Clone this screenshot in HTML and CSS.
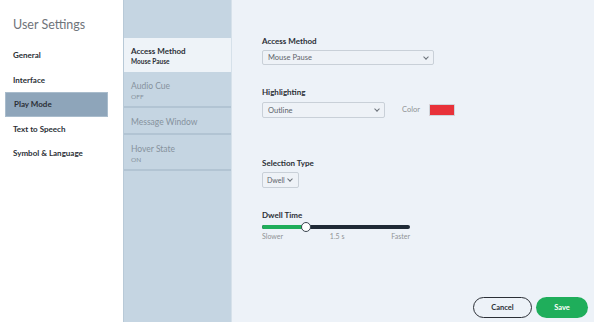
FILE: index.html
```html
<!DOCTYPE html>
<html lang="en">
<head>
    <meta charset="UTF-8">
    <title>User Settings</title>
    <link rel="stylesheet" href="styles.css">
</head>
<body>
    <div class="app">
        <aside class="sidebar">
            <h1>User Settings</h1>
            <nav>
                <a href="#">General</a>
                <a href="#">Interface</a>
                <a href="#" class="active">Play Mode</a>
                <a href="#">Text to Speech</a>
                <a href="#">Symbol &amp; Language</a>
            </nav>
        </aside>

        <div class="subnav">
            <div class="subnav-top"></div>
            <div class="sub-item current">
                <div class="sub-title">Access Method</div>
                <div class="sub-value">Mouse Pause</div>
            </div>
            <div class="sub-item">
                <div class="sub-title">Audio Cue</div>
                <div class="sub-value">OFF</div>
            </div>
            <div class="sub-item single">
                <div class="sub-title">Message Window</div>
            </div>
            <div class="sub-item">
                <div class="sub-title">Hover State</div>
                <div class="sub-value">ON</div>
            </div>
        </div>

        <main class="panel">
            <div class="field">
                <label>Access Method</label>
                <div class="select wide"><span>Mouse Pause</span><span class="caret"></span></div>
            </div>

            <div class="field">
                <label>Highlighting</label>
                <div class="row">
                    <div class="select mid"><span>Outline</span><span class="caret"></span></div>
                    <span class="color-label">Color</span>
                    <span class="swatch"></span>
                </div>
            </div>

            <div class="field spaced">
                <label>Selection Type</label>
                <div class="select small"><span>Dwell</span><span class="caret"></span></div>
            </div>

            <div class="field">
                <label>Dwell Time</label>
                <div class="slider">
                    <div class="track">
                        <div class="fill" style="width: 30%"></div>
                        <div class="thumb" style="left: 30%"></div>
                    </div>
                    <div class="ticks">
                        <span>Slower</span>
                        <span>1.5 s</span>
                        <span>Faster</span>
                    </div>
                </div>
            </div>

            <div class="actions">
                <button class="btn cancel">Cancel</button>
                <button class="btn save">Save</button>
            </div>
        </main>
    </div>
</body>
</html>
```

FILE: styles.css
```css
body {
    margin: 0;
    font-family: 'Lato', 'Noto Sans', sans-serif;
    color: #2b2f36;
}
.app {
    display: flex;
    width: 594px;
    height: 322px;
    overflow: hidden;
}
.sidebar {
    width: 123px;
    background: #ffffff;
    flex-shrink: 0;
}
.sidebar h1 {
    margin: 17px 0 0 13px;
    font-size: 12.5px;
    font-weight: 400;
    color: #6f747b;
}
.sidebar nav {
    display: flex;
    flex-direction: column;
    margin-top: 11px;
}
.sidebar nav a {
    display: block;
    height: 24.5px;
    line-height: 24.5px;
    margin-right: 15px;
    margin-left: 5px;
    padding-left: 8px;
    font-size: 8px;
    font-weight: 700;
    color: #2b2f36;
    text-decoration: none;
}
.sidebar nav a.active {
    background: #8ea5ba;
    border: 1px solid #a9bccc;
    height: 22.5px;
    line-height: 22.5px;
}
.subnav {
    width: 107px;
    flex-shrink: 0;
    background: #c5d5e2;
    border-left: 1px solid #b8c9d7;
    border-right: 1px solid #d6e1ea;
}
.subnav-top {
    height: 38px;
}
.sub-item {
    height: 36px;
    padding: 9px 7px 0;
    box-sizing: border-box;
    border-bottom: 2px solid #b2c4d3;
    color: #86929d;
}
.sub-item.single {
    height: 27px;
}
.sub-item.current {
    background: #eef3f8;
    color: #2b2f36;
    border-bottom: none;
    height: 34px;
    padding-top: 8px;
}
.sub-title {
    font-size: 8.5px;
    line-height: 10px;
}
.current .sub-title {
    font-size: 8px;
    font-weight: 700;
}
.sub-value {
    font-size: 6.5px;
    line-height: 10px;
    margin-top: 1px;
}
.current .sub-value {
    font-weight: 700;
}
.panel {
    flex: 1;
    background: #edf2f8;
    padding: 36px 0 0 30px;
    position: relative;
}
.field {
    margin-bottom: 22px;
}
.field.spaced {
    margin-top: 40px;
    margin-bottom: 22px;
}
.field label {
    display: block;
    font-size: 8px;
    font-weight: 700;
    margin-bottom: 4px;
}
.row {
    display: flex;
    align-items: center;
}
.select {
    display: flex;
    justify-content: space-between;
    align-items: center;
    height: 15px;
    box-sizing: border-box;
    padding: 0 5px;
    border: 1px solid #c9d0d8;
    border-radius: 2px;
    background: #eef2f7;
    font-size: 7.5px;
    color: #5d636a;
}
.select.wide {
    width: 172px;
}
.select.mid {
    width: 123px;
    height: 16px;
    margin-top: 1px;
}
.select.small {
    width: 37px;
    height: 16px;
    padding: 0 6px 0 4px;
    font-size: 7px;
}
.caret {
    flex-shrink: 0;
    width: 3px;
    height: 3px;
    border-right: 1px solid #6b7179;
    border-bottom: 1px solid #6b7179;
    transform: rotate(45deg);
    margin-top: -2px;
}
.color-label {
    font-size: 7.5px;
    color: #909396;
    margin-left: 17px;
}
.swatch {
    width: 26px;
    height: 12px;
    margin-left: 9px;
    background: #e8323a;
    border: 1px solid #cfd5db;
    box-sizing: border-box;
    border-radius: 1px;
}
.slider {
    width: 148px;
}
.track {
    position: relative;
    height: 4px;
    margin-top: 5px;
    border-radius: 2px;
    background: #1f2a36;
}
.fill {
    height: 4px;
    border-radius: 2px;
    background: #1fae5b;
}
.thumb {
    position: absolute;
    top: -3px;
    width: 10px;
    height: 10px;
    margin-left: -5px;
    border-radius: 50%;
    background: #ffffff;
    border: 1px solid #3a4550;
    box-sizing: border-box;
}
.ticks {
    display: flex;
    justify-content: space-between;
    margin-top: 3px;
    font-size: 7px;
    color: #909396;
}
.actions {
    position: absolute;
    right: 6px;
    bottom: 4px;
    display: flex;
    gap: 4px;
}
.btn {
    height: 21px;
    border-radius: 11px;
    font-family: inherit;
    font-size: 7.5px;
    font-weight: 700;
    cursor: pointer;
}
.cancel {
    width: 59px;
    background: #edf2f8;
    border: 1px solid #2b2f36;
    color: #2b2f36;
}
.save {
    width: 52px;
    background: #1fae5b;
    border: none;
    color: #ffffff;
}
```
